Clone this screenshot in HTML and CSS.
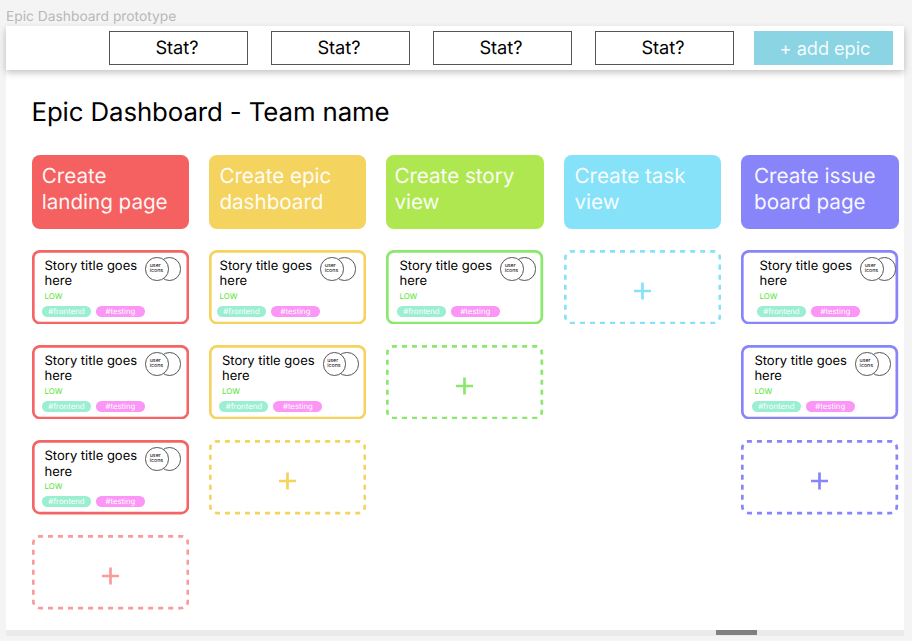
FILE: index.html
```
<!DOCTYPE html>
<html lang="en">
<head>
<meta charset="utf-8">
<title>Epic Dashboard prototype</title>
<link rel="stylesheet" href="styles.css">
</head>
<body>
<div class="label">Epic Dashboard prototype</div>
<div class="frame">
  <header class="topbar">
    <div class="stat">Stat?</div>
    <div class="stat">Stat?</div>
    <div class="stat">Stat?</div>
    <div class="stat">Stat?</div>
    <button class="add-epic">+ add epic</button>
  </header>
  <h1>Epic Dashboard - Team name</h1>
  <main class="board" id="board"></main>
</div>
<div class="scrollbar"><div class="thumb"></div></div>
<script src="board.js"></script>
</body>
</html>
```
FILE: styles.css
```
* { box-sizing: border-box; }
body { margin: 0; width: 912px; height: 641px; overflow: hidden; background: #f4f4f4; font-family: Inter, "Liberation Sans", sans-serif; color: #000; text-rendering: geometricPrecision; }
.label { height: 26px; padding: 8px 0 0 6px; font-size: 13.8px; line-height: 18px; color: #b8b8b8; white-space: nowrap; }
.frame { width: 898px; height: 604px; margin-left: 6px; background: #fff; }
.topbar { display: flex; gap: 23px; height: 43.5px; padding: 5px 0 0 103px; background: #fff; box-shadow: 0 2.5px 7px 0 rgba(0,0,0,.25); }
.stat, .add-epic { flex: none; width: 139px; height: 34px; display: flex; align-items: center; justify-content: center; font-size: 18.2px; line-height: 22px; }
.stat { border: 1px solid #555; padding-right: 3px; }
.add-epic { margin-left: -3px; border: 0; padding: 0 0 0 3px; background: #8bd4e3; color: rgba(255,255,255,.92); font-family: inherit; font-weight: 400; letter-spacing: -.05px; }
h1 { margin: 27.5px 0 0 25.5px; height: 31px; font-size: 25.8px; line-height: 32px; font-weight: 400; letter-spacing: -.1px; white-space: nowrap; }
.board { display: flex; gap: 20.33px; margin: 26.7px 0 0 25.55px; }
.column { flex: none; width: 157.15px; display: flex; flex-direction: column; gap: 20.8px; }
.epic { height: 74.4px; border-radius: 8px; padding: 8.3px 0 0 var(--inset); background: var(--fill); color: rgba(255,255,255,.94); font-size: 20.7px; line-height: 26px; font-weight: 400; letter-spacing: -.05px; white-space: pre-line; }
.red { --fill: #f56161; --line: #f56565; --dash: #fa9b9b; --inset: 10.2px; }
.yellow { --fill: #f4d35f; --line: #f4d35f; --dash: #f4d35f; --inset: 10.4px; }
.green { --fill: #afe751; --line: #8be76d; --dash: #8be76d; --inset: 7.9px; }
.blue { --fill: #85e2f9; --line: #85e2f9; --dash: #85e2f9; --inset: 10.5px; }
.violet { --fill: #8884fa; --line: #8884fa; --dash: #8884fa; --inset: 12.6px; }
.story { position: relative; height: 74.4px; padding: 8.2px 0 0 var(--shift, 10.4px); }
.outline { position: absolute; inset: 0; width: 100%; height: 100%; fill: none; stroke: var(--line); stroke-width: 2.7; }
.top { display: flex; gap: 5px; height: 31.8px; padding-left: 2.6px; }
.title { width: 95.5px; padding-top: .8px; font-size: 13px; line-height: 15.4px; white-space: nowrap; }
.users { position: relative; width: 36.2px; height: 23.6px; margin-top: -1.1px; display: flex; }
.user { flex: none; width: 23.6px; height: 23.6px; border: 1px solid #555; border-radius: 50%; background: #fff; font-size: 5.3px; line-height: 5.2px; padding: 5.8px 0 0 3.7px; }
.user.back { margin-left: -11px; }
.user.front { position: relative; z-index: 1; }
.low { height: 10px; padding-left: 2.6px; margin-top: .8px; font-size: 7.8px; line-height: 10px; color: #4fe52a; }
.tags { display: flex; gap: 5px; margin-top: 5.4px; }
.tag { width: 49px; height: 10.6px; border-radius: 6px; text-align: center; font-size: 7.8px; line-height: 10.4px; color: #fff; background: #9aeed1; }
.tag.pink { background: #fb95f6; }
.add { height: 74.4px; }
.add svg { display: block; width: 157.15px; height: 74.4px; fill: none; stroke: var(--dash); stroke-width: 2.7; }
.scrollbar { width: 898px; height: 6px; margin-left: 6px; background: #ebebeb; }
.thumb { width: 41px; height: 5px; margin-left: 710px; background: #808080; }
```
FILE: board.js
```
const columns = [
  { color: 'red', title: 'Create\nlanding page', stories: [10.4, 10.4, 10.4] },
  { color: 'yellow', title: 'Create epic\ndashboard', stories: [8, 10.4] },
  { color: 'green', title: 'Create story\nview', stories: [10.4] },
  { color: 'blue', title: 'Create task\nview', stories: [] },
  { color: 'violet', title: 'Create issue\nboard page', stories: [15.5, 10.4] }
];

const story = (shift) => `
  <article class="story" style="--shift:${shift}px">
    <svg class="outline"><rect x="1.3" y="1.3" width="154.55" height="71.8" rx="6.7"/></svg>
    <div class="top">
      <div class="title">Story title goes<br>here</div>
      <div class="users"><div class="user front">user<br>icons</div><div class="user back"></div></div>
    </div>
    <div class="low">LOW</div>
    <div class="tags"><span class="tag">#frontend</span><span class="tag pink">#testing</span></div>
  </article>`;

const add = `
  <div class="add">
    <svg viewBox="0 0 157.15 74.4">
      <rect x="1.3" y="1.3" width="154.55" height="71.8" rx="6.7" pathLength="44" stroke-dasharray=".5 .5" stroke-dashoffset=".21"/>
      <path d="M70 41h17M78.5 32.5v17"/>
    </svg>
  </div>`;

document.getElementById('board').innerHTML = columns.map(c => `
  <section class="column ${c.color}">
    <div class="epic">${c.title}</div>${c.stories.map(story).join('')}${add}
  </section>`).join('');
```
